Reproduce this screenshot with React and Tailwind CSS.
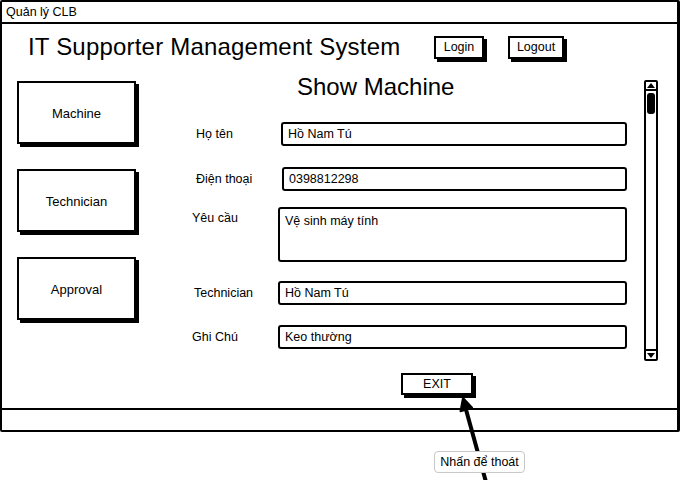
import React from 'react';

const font = { fontFamily: '"Liberation Sans", Arial, sans-serif' };

const rows = [
  { label: 'Họ tên', text: 'Hồ Nam Tú', row: 'mt-[18px] items-center', lab: 'pl-[34px]', box: 'ml-[3px] w-[346px] h-[24px] items-center' },
  { label: 'Điện thoại', text: '0398812298', row: 'mt-[21px] items-center', lab: 'pl-[34px]', box: 'ml-[4px] w-[345px] h-[24px] items-center' },
  { label: 'Yêu cầu', text: 'Vệ sinh máy tính', row: 'mt-[16px] items-start', lab: 'pl-[30px] pt-[2px]', box: 'w-[349px] h-[55px] items-start pt-[3px]' },
  { label: 'Technician', text: 'Hồ Nam Tú', row: 'mt-[19px] items-center', lab: 'pl-[32px]', box: 'w-[349px] h-[24px] items-center' },
  { label: 'Ghi Chú', text: 'Keo thường', row: 'mt-[20px] items-center', lab: 'pl-[30px]', box: 'w-[349px] h-[24px] items-center' },
];

function SketchButton({ children, className }) {
  return (
    <div className={`flex items-center justify-center border-2 border-black bg-white shadow-[3px_3px_0_0_#000] ${className}`}>
      {children}
    </div>
  );
}

export default function App() {
  return (
    <div className="relative w-[681px] h-[480px] bg-white text-black" style={font}>
      {/* window frame */}
      <div className="w-[680px] h-[432px] border-2 border-r-[3px] border-black flex flex-col rounded-[2px]">
        <div className="h-[22px] border-b-2 border-black flex items-center pl-[4px] text-[12.5px]">
          Quản lý CLB
        </div>

        <div className="flex-1 flex flex-col">
          {/* header */}
          <div className="h-[46px] flex items-center pl-[26px]">
            <h1 className="w-[406px] text-[24px] tracking-[0.2px]">IT Supporter Management System</h1>
            <SketchButton className="w-[50px] h-[23px] text-[12.5px]">Login</SketchButton>
            <SketchButton className="ml-[24px] w-[56px] h-[23px] text-[12.5px]">Logout</SketchButton>
          </div>

          {/* main */}
          <div className="flex flex-1">
            <div className="w-[160px] pl-[15px] pt-[11px] flex flex-col gap-[25px]">
              <SketchButton className="w-[119px] h-[63px] text-[13px] pt-[2px]">Machine</SketchButton>
              <SketchButton className="w-[119px] h-[63px] text-[13px] pt-[2px]">Technician</SketchButton>
              <SketchButton className="w-[119px] h-[63px] text-[13px] pt-[2px]">Approval</SketchButton>
            </div>

            <div className="w-[470px] flex flex-col">
              <div className="h-[34px] flex items-center pl-[135px] text-[24px]">Show Machine</div>
              {rows.map((r) => (
                <div key={r.label} className={`flex ${r.row}`}>
                  <div className={`w-[116px] text-[12.5px] ${r.lab}`}>{r.label}</div>
                  <div className={`flex border-2 border-black rounded-[3px] pl-[5px] text-[12.5px] ${r.box}`}>
                    {r.text}
                  </div>
                </div>
              ))}
              <SketchButton className="mt-[24px] ml-[239px] w-[72px] h-[22px] text-[12.5px]">EXIT</SketchButton>
            </div>

            {/* scrollbar */}
            <div className="ml-[12px] mt-[10px] w-[14px] h-[281px] border-2 border-black rounded-[2px] flex flex-col">
              <div className="h-[9px] border-b-2 border-black flex items-center justify-center">
                <svg width="8" height="5" viewBox="0 0 8 5"><path d="M4 0 L8 5 L0 5 Z" fill="#000" /></svg>
              </div>
              <div className="mt-[2px] mx-auto w-[8px] h-[21px] bg-black rounded-[3px]" />
              <div className="mt-auto h-[10px] border-t-2 border-black flex items-center justify-center">
                <svg width="8" height="5" viewBox="0 0 8 5"><path d="M0 0 L8 0 L4 5 Z" fill="#000" /></svg>
              </div>
            </div>
          </div>
        </div>

        <div className="h-[22px] border-t-2 border-black" />
      </div>

      {/* callout arrow */}
      <svg className="absolute left-0 top-0 pointer-events-none" width="681" height="480">
        <line x1="486" y1="482" x2="465" y2="406" stroke="#000" strokeWidth="4" />
        <path d="M463 398 L460.5 411.2 L472.1 407.8 Z" fill="#000" stroke="#000" strokeWidth="2" strokeLinejoin="round" />
      </svg>

      <div className="absolute left-[434px] top-[451px] w-[91px] h-[22px] flex items-center justify-center bg-white border border-[#c8c8c8] rounded-[4px] text-[12.5px]">
        Nhấn để thoát
      </div>
    </div>
  );
}
